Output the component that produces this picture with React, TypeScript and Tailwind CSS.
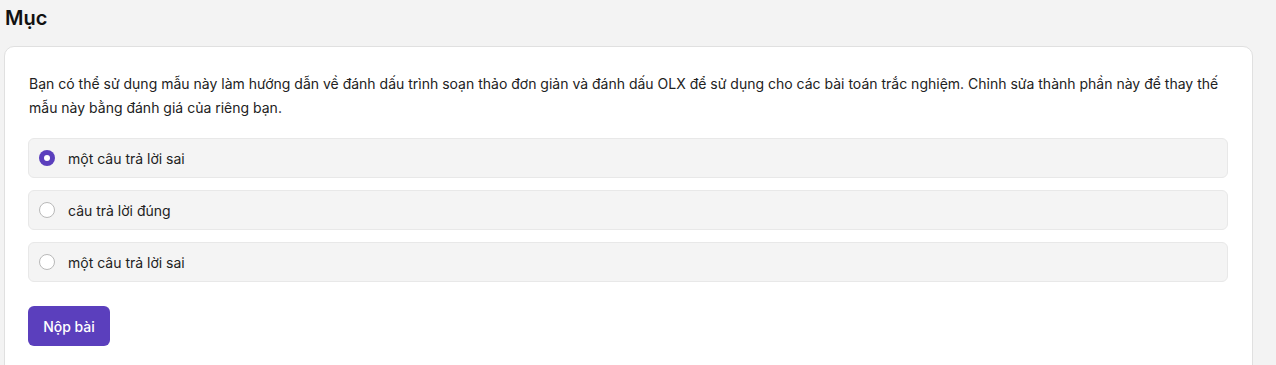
import React, { useState } from 'react';

const options = ['một câu trả lời sai', 'câu trả lời đúng', 'một câu trả lời sai'];

export default function App() {
  const [selected, setSelected] = useState(0);

  return (
    <div className="min-h-[365px] bg-[#f3f3f3] pl-1 pr-[23px] pt-[5px] text-[#1e1e1e] font-['Inter',sans-serif]">
      <h1 className="pl-px text-[20px] font-semibold leading-[26px] text-[#111]">Mục</h1>
      <div className="mt-[15px] h-[330px] rounded-[10px] border border-[#e0e0e0] bg-white pl-[23px] pr-6 pt-[25px]">
        <p className="pl-px text-[14px] leading-6 text-[#222]">
          Bạn có thể sử dụng mẫu này làm hướng dẫn về đánh dấu trình soạn thảo đơn giản và đánh dấu OLX để sử dụng cho các bài toán trắc nghiệm. Chỉnh sửa thành phần này để thay thế mẫu này bằng đánh giá của riêng bạn.
        </p>
        <div className="mt-[18px] flex flex-col gap-3">
          {options.map((label, i) => (
            <label
              key={i}
              onClick={() => setSelected(i)}
              className="flex h-10 cursor-pointer items-center gap-[13px] rounded-md border border-[#e8e8e8] bg-[#f4f4f4] pl-[10px] text-[14px] text-[#222]"
            >
              {selected === i ? (
                <span className="flex h-4 w-4 items-center justify-center rounded-full bg-[#5b3fbd]">
                  <span className="h-[6px] w-[6px] rounded-full bg-white" />
                </span>
              ) : (
                <span className="h-4 w-4 rounded-full border border-[#b9b9b9] bg-white" />
              )}
              <span>{label}</span>
            </label>
          ))}
        </div>
        <button className="mt-6 h-10 w-[82px] rounded-md bg-[#5b3fbd] text-[14px] font-medium text-white">
          Nộp bài
        </button>
      </div>
    </div>
  );
}
